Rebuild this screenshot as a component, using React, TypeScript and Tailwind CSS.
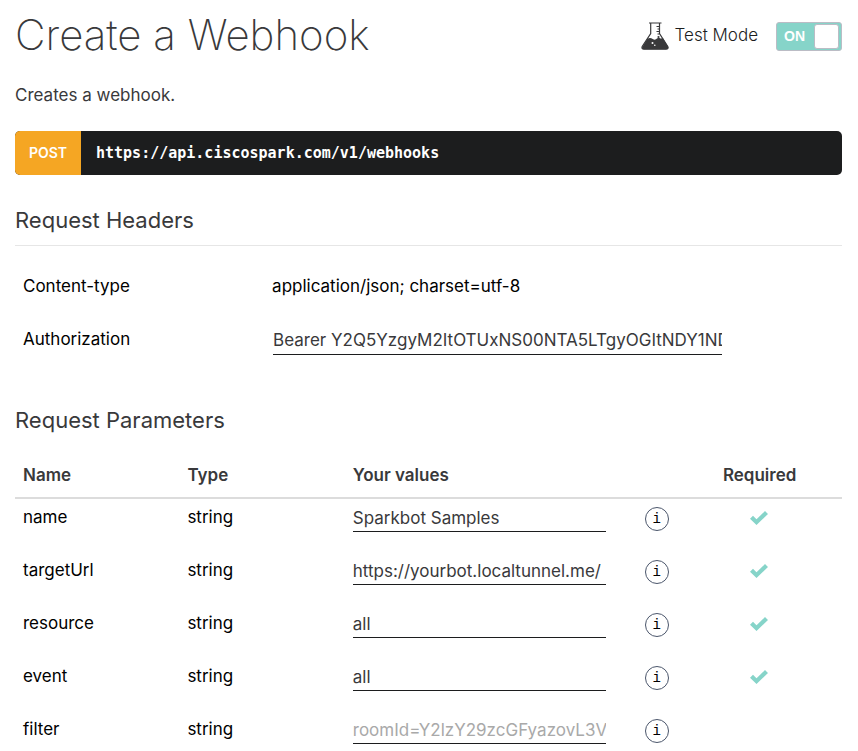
import React from 'react';

type Param = {
  name: string;
  type: string;
  value?: string;
  placeholder?: string;
  required: boolean;
};

const params: Param[] = [
  { name: 'name', type: 'string', value: 'Sparkbot Samples', required: true },
  { name: 'targetUrl', type: 'string', value: 'https://yourbot.localtunnel.me/', required: true },
  { name: 'resource', type: 'string', value: 'all', required: true },
  { name: 'event', type: 'string', value: 'all', required: true },
  { name: 'filter', type: 'string', placeholder: 'roomId=Y2lzY29zcGFyazovL3VzL', required: false },
];

const fieldClass =
  'block w-full border-b border-[#1c1d1e] bg-transparent p-0 text-[#39393b] outline-none placeholder:text-[#a9a9a9]';

function Flask() {
  return (
    <svg viewBox="0 0 28 28" className="h-7 w-7" aria-hidden="true">
      <path d="M8 1h12.500M9.700 1.500v10L1.200 24.500Q.2 27.200 3 27.200h22q2.800 0 1.800-2.700l-8.300-13v-10" fill="none" stroke="#39393b" strokeWidth="1.200" />
      <path d="M6.200 17q2.800-2 5.500 0 2.500 1.500 4.300-.500 1.500-1.500 3.500 0l2.500-.200 5.200 8.700q.5 2.200-2.200 2.200H3q-2.700 0-1.700-2.200z" fill="#39393b" />
      <path d="M15.500 4.500h3M16.500 7h2M15.500 9.500h3M16.500 12h2" stroke="#39393b" strokeWidth="1" />
      <circle cx="17.500" cy="15" r="1.100" fill="#39393b" />
      <circle cx="11.500" cy="21" r="1" fill="#fff" />
      <circle cx="13.800" cy="23.300" r=".8" fill="#fff" />
    </svg>
  );
}

function Check() {
  return (
    <svg viewBox="0 0 18 14" className="h-3.5 w-[18px]" role="img" aria-label="Required">
      <path d="M0 7.800 3 4.800 6.500 8.200 15 0 18 3 6.500 14z" fill="#86d4c9" />
    </svg>
  );
}

export default function App() {
  return (
    <main className="bg-white pl-[15px] pr-4 font-['Inter','Liberation_Sans',sans-serif] text-[17px] leading-6 text-[#39393b]">
      <header className="flex items-start justify-between pt-2">
        <h1 className="text-[42px] font-extralight leading-[54px]">Create a Webhook</h1>
        <label className="flex cursor-pointer items-center pt-3">
          <Flask />
          <span className="ml-1.5 mr-[18px] pb-0.5 font-light text-[#1c1d1e]">Test Mode</span>
          <input type="checkbox" role="switch" defaultChecked className="peer sr-only" />
          <span className="mt-0.5 flex h-[29px] w-[66px] items-center justify-between rounded-[3px] border border-[#bbbcc5] bg-[#86d4c9] pl-[7px] pr-0.5 font-['Liberation_Sans',sans-serif] text-sm font-bold text-white">
            <span className="pb-0.5">ON</span>
            <span className="h-[25px] w-[25px] rounded-[3px] border border-[#bbbcc5] bg-white" />
          </span>
        </label>
      </header>

      <p className="mt-[21px]">Creates a webhook.</p>

      <div className="mt-6 flex h-11 overflow-hidden rounded-[5px] bg-[#1c1d1e] text-white">
        <span className="flex w-[66px] items-center justify-center bg-[#f5a623] text-sm font-semibold">POST</span>
        <code className="flex items-center pl-[15px] font-['DejaVu_Sans_Mono',monospace] text-[15px] font-bold">
          https://api.ciscospark.com/v1/webhooks
        </code>
      </div>

      <section>
        <h2 className="mt-[30px] border-b border-[#e6e6e6] pb-2.5 text-[22px] font-normal leading-[30px]">Request Headers</h2>
        <table className="mt-[13px] w-full table-fixed text-left text-black">
          <colgroup>
            <col className="w-[30%]" />
            <col className="w-[56%]" />
            <col />
          </colgroup>
          <tbody>
            <tr className="h-[53px]">
              <th scope="row" className="pl-2 font-normal">Content-type</th>
              <td className="pl-[9px]">application/json; charset=utf-8</td>
              <td />
            </tr>
            <tr className="h-[53px]">
              <th scope="row" className="pl-2 font-normal">
                <label htmlFor="authorization">Authorization</label>
              </th>
              <td className="pl-2.5 pr-1 pt-1">
                <input
                  id="authorization"
                  defaultValue="Bearer Y2Q5YzgyM2ItOTUxNS00NTA5LTgyOGItNDY1NDY1NDA5"
                  className={`h-[29px] ${fieldClass}`}
                />
              </td>
              <td />
            </tr>
          </tbody>
        </table>
      </section>

      <section>
        <h2 className="mt-10 text-[22px] font-normal leading-[30px]">Request Parameters</h2>
        <table className="mt-4 w-full table-fixed text-left text-black">
          <colgroup>
            <col className="w-[20%]" />
            <col className="w-[20%]" />
            <col className="w-[33%]" />
            <col className="w-[12%]" />
            <col className="w-[15%]" />
          </colgroup>
          <thead className="text-[#39393b]">
            <tr className="h-[47px] border-b-2 border-[#dcdcdc]">
              <th scope="col" className="pl-2 pt-px font-semibold">Name</th>
              <th scope="col" className="pl-[7px] pt-px font-semibold">Type</th>
              <th scope="col" className="pl-[7px] pt-px font-semibold">Your values</th>
              <td />
              <th scope="col" className="pl-[5px] pt-px font-semibold">Required</th>
            </tr>
          </thead>
          <tbody>
            {params.map((param) => (
              <tr key={param.name} className="group align-top">
                <td className="pl-2 pt-1.5">
                  <label htmlFor={param.name}>{param.name}</label>
                </td>
                <td className="pl-[7px] pt-1.5">{param.type}</td>
                <td className="pl-[7px] pr-[13px] pt-1.5">
                  <input
                    id={param.name}
                    defaultValue={param.value}
                    placeholder={param.placeholder}
                    className={`h-[27px] ${fieldClass}`}
                  />
                </td>
                <td className="pb-[21px] pl-[26px] pt-2 group-last:pb-0">
                  <button
                    type="button"
                    aria-label={`About ${param.name}`}
                    className="flex h-6 w-6 items-center justify-center rounded-full border border-[#4b566b] font-['Liberation_Mono',monospace] text-sm leading-none text-black"
                  >
                    i
                  </button>
                </td>
                <td className="pl-[5px] pt-3">
                  <div className="flex w-[73px] justify-center">{param.required && <Check />}</div>
                </td>
              </tr>
            ))}
          </tbody>
        </table>
      </section>
    </main>
  );
}
